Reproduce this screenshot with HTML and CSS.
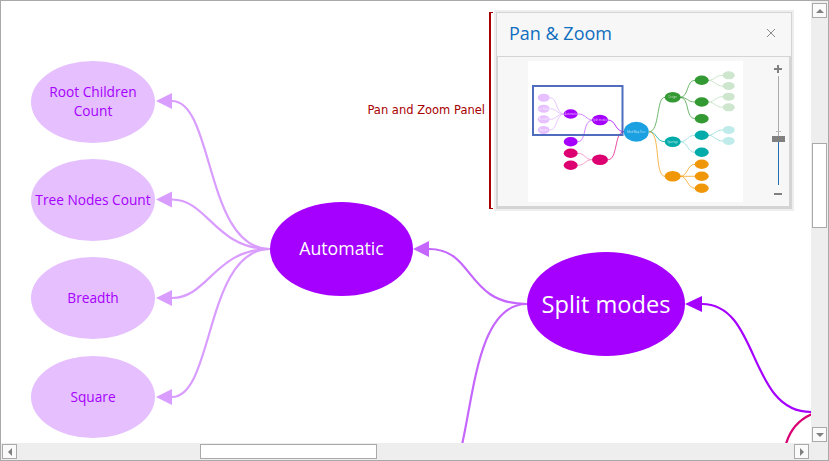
FILE: index.html
```html
<!DOCTYPE html>
<html>
<head>
    <title>Pan and Zoom</title>
    <link rel="stylesheet" href="styles.css">
</head>
<body>
    <div class="window">
        <div class="top-row">
            <div class="canvas">
                <svg class="diagram" width="810" height="442" viewBox="1 1 810 442">
                    <!-- links -->
                    <path class="link link-light" d="M270 249 C205 249 214 101 172 101"/>
                    <path class="link link-light" d="M270 249 C215 249 208 199.500 172 199.500"/>
                    <path class="link link-light" d="M270 249 C215 249 208 298 172 298"/>
                    <path class="link link-light" d="M270 249 C205 249 214 397 172 397"/>
                    <path class="link link-mid" d="M527 304 C465 304 475 249 429 249"/>
                    <path class="link link-mid" d="M527 304 C455 304 480 501 429 501"/>
                    <path class="link link-dark" d="M702 304 C760 304 748 412 811 412"/>
                    <path class="link link-pink" d="M812 414 C798 420 790 430 786 444"/>

                    <!-- arrow heads -->
                    <polygon class="head-light" points="156,101 172,93 172,109"/>
                    <polygon class="head-light" points="156,199.500 172,191.500 172,207.500"/>
                    <polygon class="head-light" points="156,298 172,290 172,306"/>
                    <polygon class="head-light" points="156,397 172,389 172,405"/>
                    <polygon class="head-mid" points="413,249 429,241 429,257"/>
                    <polygon class="head-dark" points="685,304 702,296 702,312"/>

                    <!-- nodes -->
                    <ellipse class="node-light" cx="93" cy="102" rx="62" ry="41"/>
                    <ellipse class="node-light" cx="93" cy="200" rx="62" ry="41"/>
                    <ellipse class="node-light" cx="93" cy="298" rx="62" ry="41"/>
                    <ellipse class="node-light" cx="93" cy="397" rx="62" ry="41"/>
                    <ellipse class="node-dark" cx="341.500" cy="249" rx="71.500" ry="47"/>
                    <ellipse class="node-dark" cx="606" cy="304" rx="79" ry="52"/>

                    <text class="label-light" x="93" y="97">Root Children</text>
                    <text class="label-light" x="93" y="116">Count</text>
                    <text class="label-light" x="93" y="205">Tree Nodes Count</text>
                    <text class="label-light" x="93" y="303">Breadth</text>
                    <text class="label-light" x="93" y="402">Square</text>
                    <text class="label-mid" x="341.500" y="255">Automatic</text>
                    <text class="label-big" x="606" y="313">Split modes</text>
                </svg>

                <div class="callout">
                    <span class="callout-text">Pan and Zoom Panel</span>
                    <div class="bracket"></div>
                </div>

                <div class="panel">
                    <div class="panel-header">
                        <span class="panel-title">Pan &amp; Zoom</span>
                        <svg class="panel-close" width="10" height="10" viewBox="0 0 10 10">
                            <path d="M1 1 L9 9 M9 1 L1 9"/>
                        </svg>
                    </div>
                    <div class="panel-body">
                        <svg class="minimap" width="215" height="141" viewBox="528 61 215 141">
                            <g class="mini-art">
                                <g class="mini-link">
                                    <path class="s-light" d="M565 114 C555 114 558 97.700 550 97.700 M565 114 C556 114 557 108.700 550 108.700 M565 114 C556 114 557 119.300 550 119.300 M565 114 C555 114 558 130 550 130"/>
                                    <path class="s-mid" d="M593 120 C586 120 586 114 578 114 M593 120 C582 120 587 141.700 578 141.700"/>
                                    <path class="s-dark" d="M624 131.700 C615 131.700 616 120 608 120"/>
                                    <path class="s-pink" d="M624 131.700 C614 131.700 618 159.700 608 159.700"/>
                                    <path class="s-pinklight" d="M592 159.700 C585 159.700 585 153.300 578 153.300 M592 159.700 C585 159.700 585 165.300 578 165.300"/>
                                    <path class="s-green" d="M649 131.700 C660 131.700 656 97.300 665 97.300"/>
                                    <path class="s-green" d="M680 97.300 C689 97.300 686 80.300 695 80.300 M680 97.300 C688 97.300 687 102 695 102 M680 97.300 C690 97.300 685 118.700 695 118.700"/>
                                    <path class="s-greenlight" d="M708 80.300 C715 80.300 715 75.300 723 75.300 M708 80.300 C715 80.300 715 86 723 86 M708 102 C715 102 715 96.700 723 96.700 M708 102 C715 102 715 107.300 723 107.300"/>
                                    <path class="s-teal" d="M649 131.700 C657 131.700 656 141.700 665 141.700"/>
                                    <path class="s-teallight" d="M680 141.700 C688 141.700 687 135.300 695 135.300 M680 141.700 C688 141.700 687 152.300 695 152.300 M708 135.300 C715 135.300 715 130 723 130 M708 135.300 C715 135.300 715 141 723 141"/>
                                    <path class="s-orange" d="M649 131.700 C661 131.700 654 176.300 665 176.300 M680 176.300 C688 176.300 687 164.300 695 164.300 M680 176.300 L695 176.300 M680 176.300 C688 176.300 687 188.300 695 188.300"/>
                                </g>

                                <g class="f-light">
                                    <ellipse cx="543.700" cy="97.700" rx="6" ry="4"/>
                                    <ellipse cx="543.700" cy="108.700" rx="6" ry="4"/>
                                    <ellipse cx="543.700" cy="119.300" rx="6" ry="4"/>
                                    <ellipse cx="543.700" cy="130" rx="6" ry="4"/>
                                </g>
                                <g class="f-dark">
                                    <ellipse cx="570.700" cy="114" rx="7" ry="4.700"/>
                                    <ellipse cx="600" cy="120" rx="8" ry="5.200"/>
                                    <ellipse cx="570.700" cy="141.700" rx="7" ry="4.700"/>
                                </g>
                                <g class="f-pink">
                                    <ellipse cx="570.700" cy="153.300" rx="7" ry="4.700"/>
                                    <ellipse cx="570.700" cy="165.300" rx="7" ry="4.700"/>
                                    <ellipse cx="600" cy="159.700" rx="8" ry="5.200"/>
                                </g>
                                <ellipse class="f-blue" cx="636.300" cy="131.700" rx="12.500" ry="10"/>
                                <g class="f-green">
                                    <ellipse cx="672.700" cy="97.300" rx="8" ry="5.200"/>
                                    <ellipse cx="701.700" cy="80.300" rx="7" ry="4.700"/>
                                    <ellipse cx="701.700" cy="102" rx="7" ry="4.700"/>
                                    <ellipse cx="701.700" cy="118.700" rx="7" ry="4.700"/>
                                </g>
                                <g class="f-greenlight">
                                    <ellipse cx="728.700" cy="75.300" rx="6" ry="4"/>
                                    <ellipse cx="728.700" cy="86" rx="6" ry="4"/>
                                    <ellipse cx="728.700" cy="96.700" rx="6" ry="4"/>
                                    <ellipse cx="728.700" cy="107.300" rx="6" ry="4"/>
                                </g>
                                <g class="f-teal">
                                    <ellipse cx="672.700" cy="141.700" rx="8" ry="5.200"/>
                                    <ellipse cx="701.700" cy="135.300" rx="7" ry="4.700"/>
                                    <ellipse cx="701.700" cy="152.300" rx="7" ry="4.700"/>
                                </g>
                                <g class="f-teallight">
                                    <ellipse cx="728.700" cy="130" rx="6" ry="4"/>
                                    <ellipse cx="728.700" cy="141" rx="6" ry="4"/>
                                </g>
                                <g class="f-orange">
                                    <ellipse cx="672.700" cy="176.300" rx="8" ry="5.200"/>
                                    <ellipse cx="701.700" cy="164.300" rx="7" ry="4.700"/>
                                    <ellipse cx="701.700" cy="176.300" rx="7" ry="4.700"/>
                                    <ellipse cx="701.700" cy="188.300" rx="7" ry="4.700"/>
                                </g>

                                <g class="mini-label">
                                    <text x="636.300" y="132.500">Mind Map Tree</text>
                                    <text x="570.700" y="115">Automatic</text>
                                    <text x="600" y="121">Split modes</text>
                                    <text x="543.700" y="109.500">Tree Nodes</text>
                                    <text x="543.700" y="120">Breadth</text>
                                    <text x="543.700" y="131">Square</text>
                                    <text x="672.700" y="98.300">Design</text>
                                    <text x="672.700" y="142.700">Spacings</text>
                                </g>
                            </g>

                            <rect class="mini-view" x="533" y="86" width="89.500" height="49"/>
                        </svg>

                        <div class="zoom-slider">
                            <span class="zoom-plus"></span>
                            <div class="zoom-track">
                                <div class="zoom-tick"></div>
                                <div class="zoom-thumb"></div>
                            </div>
                            <span class="zoom-minus"></span>
                        </div>
                    </div>
                </div>
            </div>

            <div class="vscroll">
                <div class="sb-btn"><span class="arrow-up"></span></div>
                <div class="vscroll-track">
                    <div class="vscroll-thumb"></div>
                </div>
                <div class="sb-btn"><span class="arrow-down"></span></div>
            </div>
        </div>

        <div class="hscroll">
            <div class="sb-btn"><span class="arrow-left"></span></div>
            <div class="hscroll-track">
                <div class="hscroll-thumb"></div>
            </div>
            <div class="sb-btn"><span class="arrow-right"></span></div>
        </div>
    </div>
</body>
</html>
```

FILE: styles.css
```css
html, body {
    margin: 0;
    padding: 0;
    background: #fff;
}

.window {
    box-sizing: border-box;
    width: 829px;
    height: 461px;
    display: flex;
    flex-direction: column;
    border: 1px solid #a9a9a9;
    overflow: hidden;
    font-family: "Open Sans", sans-serif;
}

.top-row {
    display: flex;
    height: 442px;
}

.canvas {
    position: relative;
    width: 810px;
    height: 442px;
    overflow: hidden;
    background: #fff;
}

.diagram {
    display: block;
}

/* links */
.link {
    fill: none;
    stroke-width: 2.200;
}

.link-light { stroke: #d99cff; }
.link-mid { stroke: #c566ff; }
.link-dark { stroke: #a500ff; }
.link-pink { stroke: #d80073; }

.head-light { fill: #d99cff; }
.head-mid { fill: #c566ff; }
.head-dark { fill: #a500ff; }

.node-light { fill: #e6bfff; }
.node-dark { fill: #a500ff; }

.label-light {
    fill: #a500ff;
    font-size: 13.700px;
    text-anchor: middle;
}

.label-mid {
    fill: #fff;
    font-size: 17.700px;
    text-anchor: middle;
}

.label-big {
    fill: #fff;
    font-size: 23.600px;
    text-anchor: middle;
}

/* callout next to the panel */
.callout {
    position: absolute;
    left: 360px;
    top: 11px;
    width: 132px;
    height: 197px;
    display: flex;
    align-items: center;
    justify-content: flex-end;
}

.callout-text {
    margin: 0 4px 2px 0;
    color: #a80000;
    font-family: "DejaVu Sans", sans-serif;
    font-size: 11.500px;
    white-space: nowrap;
}

.bracket {
    box-sizing: border-box;
    width: 4px;
    height: 197px;
    border: 2px solid #a80000;
    border-right: none;
    border-top-width: 1px;
    border-bottom-width: 1px;
}

/* pan and zoom panel */
.panel {
    position: absolute;
    left: 495px;
    top: 11px;
    box-sizing: border-box;
    width: 296px;
    height: 197px;
    display: flex;
    flex-direction: column;
    background: #f7f7f7;
    border: 1px solid #d4d4d4;
    box-shadow: 0 0 0 2px #eeeeee;
}

.panel-header {
    box-sizing: border-box;
    height: 43px;
    display: flex;
    align-items: center;
    justify-content: space-between;
    padding: 0 15px 3px 12px;
    flex-shrink: 0;
}

.panel-title {
    color: #106ebe;
    font-size: 18px;
}

.panel-close path {
    fill: none;
    stroke: #8a8a8a;
    stroke-width: 1;
}

.panel-body {
    flex: 1;
    display: flex;
    border: 2px solid #d4d4d4;
    border-top-width: 1px;
    border-left-width: 1px;
    padding: 4px 0 4px 30px;
    min-height: 0;
}

.minimap {
    display: block;
    background: #fff;
    flex-shrink: 0;
}

.mini-art {
    filter: blur(0.35px);
}

.mini-link path {
    fill: none;
    stroke-width: 0.800;
}

.mini-label text {
    fill: #fff;
    fill-opacity: 0.7;
    font-size: 2.600px;
    text-anchor: middle;
}

.s-light { stroke: #e2b8ff; }
.s-mid { stroke: #c566ff; }
.s-dark { stroke: #a500ff; }
.s-pink { stroke: #e0208a; }
.s-pinklight { stroke: #f08cc0; }
.s-green { stroke: #4aa54a; }
.s-greenlight { stroke: #bfe0bf; }
.s-teal { stroke: #00aba9; }
.s-teallight { stroke: #8fdcda; }
.s-orange { stroke: #f5a623; }

.f-light { fill: #e6c0ff; }
.f-dark { fill: #a500ff; }
.f-pink { fill: #dc0070; }
.f-blue { fill: #1ba1e2; }
.f-green { fill: #339933; }
.f-greenlight { fill: #cde6cd; }
.f-teal { fill: #00aba9; }
.f-teallight { fill: #bfecea; }
.f-orange { fill: #f09609; }

.mini-view {
    fill: none;
    stroke: #4f6cbf;
    stroke-width: 2;
}

.zoom-slider {
    margin-left: 28px;
    width: 14px;
    display: flex;
    flex-direction: column;
    align-items: center;
}

.zoom-plus,
.zoom-minus {
    position: relative;
    display: block;
    width: 8px;
    height: 8px;
    flex-shrink: 0;
}

.zoom-plus {
    margin-top: 4px;
}

.zoom-plus::before,
.zoom-minus::before {
    content: "";
    position: absolute;
    left: 0;
    top: 3px;
    width: 8px;
    height: 2px;
    background: #808080;
}

.zoom-plus::after {
    content: "";
    position: absolute;
    left: 3px;
    top: 0;
    width: 2px;
    height: 8px;
    background: #808080;
}

.zoom-track {
    position: relative;
    width: 1px;
    height: 109px;
    margin: 3px 0 5px;
    background: linear-gradient(to bottom, #aaaaaa 0, #aaaaaa 63px, #1f6fb2 63px);
}

.zoom-tick {
    position: absolute;
    left: -2px;
    top: 55px;
    width: 5px;
    height: 1px;
    background: #bbbbbb;
}

.zoom-thumb {
    position: absolute;
    left: -6px;
    top: 60px;
    width: 13px;
    height: 6px;
    background: #808080;
}

/* scrollbars */
.vscroll {
    width: 17px;
    height: 442px;
    display: flex;
    flex-direction: column;
    align-items: center;
    justify-content: space-between;
    padding: 2px 0 1px;
    box-sizing: border-box;
    background: #eeeeee;
}

.vscroll-track {
    flex: 1;
    width: 100%;
    display: flex;
    justify-content: center;
    align-items: flex-start;
    padding-top: 125px;
    box-sizing: border-box;
}

.vscroll-thumb {
    box-sizing: border-box;
    width: 15px;
    height: 85px;
    background: #fff;
    border: 1px solid #a9a9a9;
}

.hscroll {
    height: 17px;
    display: flex;
    align-items: center;
    background: #eeeeee;
    padding: 0 19px 0 1px;
}

.hscroll-track {
    flex: 1;
    display: flex;
    padding-left: 183px;
}

.hscroll-thumb {
    box-sizing: border-box;
    width: 177px;
    height: 15px;
    background: #fff;
    border: 1px solid #a9a9a9;
}

.sb-btn {
    box-sizing: border-box;
    width: 15px;
    height: 15px;
    display: flex;
    align-items: center;
    justify-content: center;
    background: #fafafa;
    border: 1px solid #a9a9a9;
    flex-shrink: 0;
}

.arrow-up,
.arrow-down,
.arrow-left,
.arrow-right {
    width: 0;
    height: 0;
    border-style: solid;
    border-color: transparent;
}

.arrow-up {
    border-width: 0 4px 4px;
    border-bottom-color: #808080;
}

.arrow-down {
    border-width: 4px 4px 0;
    border-top-color: #808080;
}

.arrow-left {
    border-width: 4px 4px 4px 0;
    border-right-color: #808080;
}

.arrow-right {
    border-width: 4px 0 4px 4px;
    border-left-color: #808080;
}
```
